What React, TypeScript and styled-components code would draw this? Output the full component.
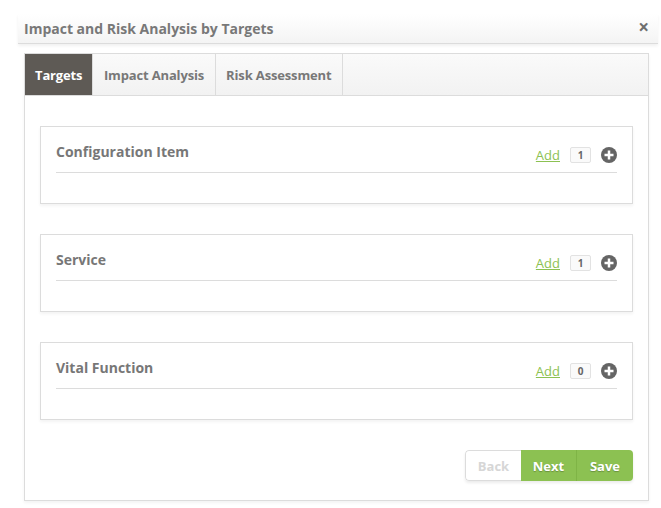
import React from "react";
import styled, { createGlobalStyle } from "styled-components";

const Global = createGlobalStyle`
  html, body { margin: 0; padding: 0; background: #fff; }
  body { font-family: "Open Sans", "Liberation Sans", sans-serif; }
  * { box-sizing: border-box; }
`;

const Page = styled.div`
  width: 661px;
  height: 508px;
  padding: 14px 3px 0 18px;
  background: #fff;
`;

const Header = styled.div`
  height: 30px;
  display: flex;
  align-items: center;
  justify-content: space-between;
  padding: 0 9px 0 6px;
  background: linear-gradient(#ffffff, #f4f4f4);
  border-bottom: 1px solid #dcdcdc;
  box-shadow: 0 2px 3px rgba(0, 0, 0, 0.06);
`;

const Title = styled.div`
  font-size: 14px;
  font-weight: 700;
  color: #787878;
`;

const Close = styled.div`
  font-size: 19px;
  font-weight: 700;
  color: #6f6f6f;
  line-height: 1;
  margin-top: -2px;
`;

const Body = styled.div`
  padding: 9px 9px 0 6px;
`;

const TabBox = styled.div`
  border: 1px solid #dcdcdc;
  height: 448px;
  display: flex;
  flex-direction: column;
  box-shadow: 0 2px 3px rgba(0, 0, 0, 0.05);
`;

const TabBar = styled.div`
  height: 42px;
  display: flex;
  background: linear-gradient(#fafafa, #f2f2f2);
  border-bottom: 1px solid #dcdcdc;
`;

const Tab = styled.div<{ $active?: boolean }>`
  display: flex;
  align-items: center;
  padding: 0 ${(p) => (p.$active ? "10px" : "10.5px")};
  font-size: 13px;
  font-weight: 700;
  letter-spacing: -0.15px;
  color: ${(p) => (p.$active ? "#fff" : "#787878")};
  background: ${(p) => (p.$active ? "#5e5a55" : "transparent")};
  border-right: 1px solid #dcdcdc;
`;

const Content = styled.div`
  flex: 1;
  padding: 30px 15px 0 15px;
  display: flex;
  flex-direction: column;
  gap: 30px;
`;

const Section = styled.div`
  height: 78px;
  border: 1px solid #dcdcdc;
  padding: 0 15px;
  box-shadow: 0 2px 3px rgba(0, 0, 0, 0.05);
`;

const SectionHead = styled.div`
  height: 46px;
  display: flex;
  align-items: center;
  justify-content: space-between;
  border-bottom: 1px solid #dcdcdc;
`;

const SectionTitle = styled.div`
  font-size: 14px;
  font-weight: 700;
  color: #777;
  padding-top: 4px;
`;

const Actions = styled.div`
  display: flex;
  align-items: center;
  padding-top: 10px;
`;

const AddLink = styled.a`
  font-size: 13px;
  color: #8cc152;
  text-decoration: underline;
  margin-right: 10px;
  cursor: pointer;
`;

const Count = styled.span`
  width: 21px;
  height: 16px;
  border: 1px solid #e2e2e2;
  border-radius: 2px;
  background: #fafafa;
  font-size: 10px;
  font-weight: 700;
  color: #666;
  display: flex;
  align-items: center;
  justify-content: center;
  margin-right: 10px;
`;

const PlusIcon = () => (
  <svg width="16" height="16" viewBox="0 0 16 16">
    <circle cx="8" cy="8" r="8" fill="#656565" />
    <rect x="3.5" y="6.75" width="9" height="2.5" fill="#fff" />
    <rect x="6.75" y="3.5" width="2.5" height="9" fill="#fff" />
  </svg>
);

const Footer = styled.div`
  display: flex;
  justify-content: flex-end;
`;

const BtnGroup = styled.div`
  display: flex;
  border-radius: 4px;
  overflow: hidden;
  box-shadow: 0 2px 3px rgba(0, 0, 0, 0.08);
`;

const Btn = styled.div<{ $primary?: boolean; $last?: boolean }>`
  width: 56px;
  height: 31px;
  display: flex;
  align-items: center;
  justify-content: center;
  font-size: 13px;
  font-weight: 700;
  color: ${(p) => (p.$primary ? "#fff" : "#d6d6d6")};
  background: ${(p) => (p.$primary ? "#8cc152" : "#fff")};
  border: ${(p) => (p.$primary ? "none" : "1px solid #dcdcdc")};
  border-right: ${(p) => (p.$primary && !p.$last ? "1px solid #7fb446" : "none")};
  border-radius: ${(p) => (p.$primary ? "0" : "4px 0 0 4px")};
  text-shadow: ${(p) => (p.$primary ? "0 1px 1px rgba(0,0,0,0.25)" : "none")};
`;

const sections = [
  { name: "Configuration Item", count: 1 },
  { name: "Service", count: 1 },
  { name: "Vital Function", count: 0 },
];

export default function App() {
  return (
    <>
      <Global />
      <Page>
        <Header>
          <Title>Impact and Risk Analysis by Targets</Title>
          <Close>×</Close>
        </Header>
        <Body>
          <TabBox>
            <TabBar>
              <Tab $active>Targets</Tab>
              <Tab>Impact Analysis</Tab>
              <Tab>Risk Assessment</Tab>
            </TabBar>
            <Content>
              {sections.map((s) => (
                <Section key={s.name}>
                  <SectionHead>
                    <SectionTitle>{s.name}</SectionTitle>
                    <Actions>
                      <AddLink>Add</AddLink>
                      <Count>{s.count}</Count>
                      <PlusIcon />
                    </Actions>
                  </SectionHead>
                </Section>
              ))}
              <Footer>
                <BtnGroup>
                  <Btn>Back</Btn>
                  <Btn $primary>Next</Btn>
                  <Btn $primary $last>Save</Btn>
                </BtnGroup>
              </Footer>
            </Content>
          </TabBox>
        </Body>
      </Page>
    </>
  );
}
